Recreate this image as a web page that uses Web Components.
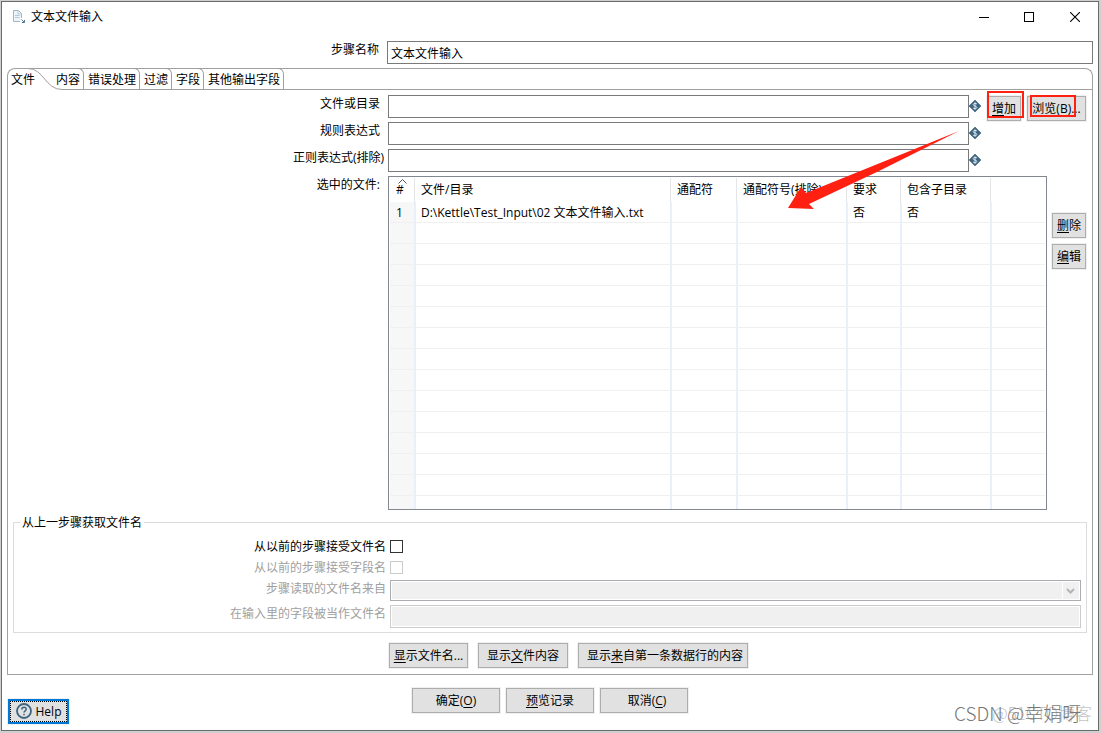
<!DOCTYPE html>
<html lang="zh-CN">
<head>
<meta charset="utf-8">
<title>文本文件输入</title>
<style>
  html { height: 100%; }
  body {
    box-sizing: border-box; min-height: 100%; margin: 0; padding: 1px 2px 2px 1px;
    display: flex; background: #cfcfcf;
    font: 12px/16px "Open Sans", "Noto Sans CJK SC", sans-serif; color: #000;
  }
</style>
</head>
<body>
<text-input-dialog></text-input-dialog>

<script>
const BASE = `
  *, *::before, *::after { box-sizing: border-box; }
  input, button, select { font: inherit; color: inherit; margin: 0; border-radius: 0; }
  u { text-underline-offset: 2px; }
`;

function define(name, html, setup) {
  const template = document.createElement('template');
  template.innerHTML = html;
  customElements.define(name, class extends HTMLElement {
    constructor() {
      super();
      this.attachShadow({ mode: 'open' }).append(template.content.cloneNode(true));
    }
    connectedCallback() {
      if (setup && !this.ready) { this.ready = true; setup(this, this.shadowRoot); }
    }
  });
}

/* Push button; its caption is slotted. */
define('push-button', `
  <style>${BASE}
    :host { display: block; }
    button {
      display: flex; align-items: center; justify-content: center; width: 100%; height: 25px;
      padding: 0 0 0 var(--caption-indent, 0); background: #e1e1e1; border: 1px solid #adadad; box-shadow: 0 0 0 1px #f0f0f0;
      white-space: nowrap;
    }
    :host([focused]) button { border: 2px solid #0078d7; outline: 1px dotted #000; outline-offset: -3px; }
  </style>
  <button type="button"><span><slot></slot></span></button>`);

/* Caption bar with the window controls. */
define('title-bar', `
  <style>${BASE}
    :host { display: flex; align-items: center; height: 29px; padding-left: 10px; }
    .icon { margin-right: 5px; }
    h1 { flex: 1; margin: 0; font: inherit; }
    button { display: grid; place-items: center; width: 46px; height: 29px; padding: 0; border: 0; background: none; }
  </style>
  <svg class="icon" width="14" height="14" viewBox="0 0 14 14" fill="none" stroke="#9db8c9">
    <path d="M8 11.500H1.500V.5H6.500L9.500 3.500V8" fill="#eef4f8"/><path d="M6 .5V4H9.500M3 5.500H7.500M3 7.500H7.500" stroke="#b4cad8"/>
    <path d="M9.500 9.500L12 12M12.500 10V12.500H10" stroke="#4d7896"/>
  </svg>
  <h1><slot></slot></h1>
  <button type="button" aria-label="最小化"><svg width="12" height="10"><path d="M2 5.500H12" stroke="#000"/></svg></button>
  <button type="button" aria-label="最大化"><svg width="10" height="10"><rect x=".5" y=".5" width="9" height="9" fill="none" stroke="#000"/></svg></button>
  <button type="button" aria-label="关闭"><svg width="10" height="10"><path d="M0 0L10 10M10 0L0 10" stroke="#000" stroke-width="1.100"/></svg></button>`);

/* Label and text box in one row, with an optional variable marker. */
define('text-row', `
  <style>${BASE}
    :host { display: flex; height: 23px; }
    label { flex: none; width: var(--label-width, 380px); padding: 1px 8px 0 0; text-align: right; white-space: nowrap; }
    :host([wide-label]) label { padding-right: 4px; }
    input { flex: 1; min-width: 0; height: 23px; padding: 0 3px; background: #fff; border: 1px solid #7a7a7a; }
    svg { display: none; flex: none; margin-top: 5px; }
    :host([variable]) svg { display: block; }
    :host([dim]) label { color: #a0a0a0; }
    :host([dim]) input { border-color: #ccc; background: #f0f0f0; box-shadow: inset 0 0 0 1px #fff; }
  </style>
  <label for="box"></label><input id="box" type="text">
  <svg width="12" height="12" viewBox="0 0 12 12">
    <path d="M6 0L12 6L6 12L0 6Z" fill="#3d6480" stroke="#3d6480" stroke-width=".6"/>
    <path d="M8 4.200C7.500 3.100 4.200 3 4.200 4.700C4.200 6.300 7.900 5.700 7.900 7.400C7.900 9.100 4.600 9 4 7.800M6 2.300V9.800" fill="none" stroke="#dfe8ee"/>
  </svg>`, (host, root) => {
  root.querySelector('label').textContent = host.getAttribute('label');
  const box = root.querySelector('input');
  box.value = host.getAttribute('value') || '';
  box.disabled = host.hasAttribute('dim');
});

define('check-row', `
  <style>${BASE}
    :host { display: flex; align-items: center; height: 21px; }
    label { width: 376px; padding-right: 4px; text-align: right; }
    input { appearance: none; width: 13px; height: 13px; border: 1px solid #333; background: #fff; }
    :host([dim]) label { color: #a0a0a0; }
    :host([dim]) input { border-color: #ccc; }
  </style>
  <label for="box"></label><input id="box" type="checkbox">`, (host, root) => {
  root.querySelector('label').textContent = host.getAttribute('label');
  root.querySelector('input').disabled = host.hasAttribute('dim');
});

define('select-row', `
  <style>${BASE}
    :host { display: flex; height: 21px; }
    label { flex: none; width: 376px; padding: 1px 4px 0 0; text-align: right; color: #a0a0a0; }
    .box { flex: 1; display: grid; }
    .box > * { grid-area: 1 / 1; }
    select { appearance: none; width: 100%; height: 21px; border: 1px solid #abadb3; background: #f0f0f0; box-shadow: inset 0 0 0 1px #fff; opacity: 1; }
    svg { justify-self: end; margin: 2px 1px 0 0; pointer-events: none; }
  </style>
  <label for="box"></label>
  <div class="box"><select id="box" disabled></select>
    <svg width="18" height="17"><path d="M.5 0V17" stroke="#fff"/><path d="M5 7L8.500 10.500L12 7" fill="none" stroke="#b4b4b4" stroke-width="2"/></svg>
  </div>`, (host, root) => {
  root.querySelector('label').textContent = host.getAttribute('label');
});

/* Tab strip: the selected tab runs into its neighbour with a sloping curve. */
define('tab-strip', `
  <style>${BASE}
    :host { position: relative; display: flex; height: 22px; margin-top: 4px; border: 1px solid #a0a0a0; border-bottom: 0; border-radius: 8px 8px 0 0; }
    button {
      height: 22px; margin-top: -1px; padding: 1px 3px 0 4px; white-space: nowrap; background: none;
      border: 1px solid #a0a0a0; border-left: 0; border-top-right-radius: 6px;
    }
    .first { width: 44px; padding-left: 3px; border: 0; text-align: left; }
    .second { border-bottom: 0; }
    .rest { flex: 1; border-bottom: 1px solid #a0a0a0; }
    svg { position: absolute; left: 0; top: -1px; pointer-events: none; }
  </style>
  <button type="button" class="first">文件</button>
  <button type="button" class="second">内容</button>
  <button type="button">错误处理</button>
  <button type="button">过滤</button>
  <button type="button">字段</button>
  <button type="button">其他输出字段</button>
  <span class="rest"></span>
  <svg width="76" height="22"><path d="M20 .5C36 .5 37 21.500 54 21.500H76" fill="none" stroke="#a0a0a0"/></svg>`);

define('file-table', `
  <style>${BASE}
    :host { display: block; height: 334px; overflow: hidden; padding: 1px; background: #fff; border: 1px solid #828790; }
    table { width: 100%; table-layout: fixed; border-collapse: separate; border-spacing: 0; }
    th, td { padding: 0 0 0 5px; font-weight: normal; text-align: left; white-space: nowrap; }
    th { height: 24px; background: linear-gradient(#e5e5e5, #e5e5e5) right 1px top / 1px 100% no-repeat; }
    td { height: 21px; padding-top: 2px; border-bottom: 1px solid #f0f0f0; border-right: 2px solid #e9f0fb; }
    th:last-child { background: none; } td:last-child { border-right: 0; }
    td:first-child { background: #f7f7f7; }
    th:first-child, td:first-child { padding-left: 6px; }
    th:first-child { position: relative; }
    svg { position: absolute; left: 8px; top: 1px; }
  </style>
  <table>
    <colgroup><col style="width:26px"><col style="width:256px"><col style="width:66px"><col style="width:110px"><col style="width:54px"><col style="width:90px"><col></colgroup>
    <thead><tr><th>#<svg width="9" height="5"><path d="M.5 4.500L4.500 .5L8.500 4.500" fill="none" stroke="#555"/></svg></th><th>文件/目录</th><th>通配符</th><th>通配符号(排除)</th><th>要求</th><th>包含子目录</th><th></th></tr></thead>
    <tbody><tr><td>1</td><td>D:\\Kettle\\Test_Input\\02 文本文件输入.txt</td><td></td><td></td><td>否</td><td>否</td><td></td></tr></tbody>
  </table>`, (host, root) => {
  const body = root.querySelector('tbody');
  for (let i = 0; i < 14; i++) {
    const row = body.insertRow();
    for (let c = 0; c < 7; c++) row.insertCell();
  }
});

define('group-box', `
  <style>${BASE}
    :host { display: block; }
    fieldset { min-width: 0; margin: 0; padding: 7px 5px 4px 0; border: 1px solid #dcdcdc; }
    legend { margin-left: 6px; padding: 0 2px; height: 14px; }
  </style>
  <fieldset><legend></legend><slot></slot></fieldset>`, (host, root) => {
  root.querySelector('legend').textContent = host.getAttribute('caption');
});

/* Red marks drawn over the form: two frames and a pointer. */
define('mark-up', `
  <style>
    :host { position: absolute; right: 8px; top: 88px; pointer-events: none; }
    svg { display: block; }
  </style>
  <svg width="310" height="130" viewBox="780 90 310 130">
    <g fill="none" stroke="#ff2012" stroke-width="2"><rect x="988" y="92" width="35" height="25"/><rect x="1031" y="96" width="44" height="20"/></g>
    <path d="M788 208L801 187L806 193L927 144L959 131L879 171L809 204L814 209Z" fill="#ff2012"/>
  </svg>`);

define('water-mark', `
  <style>
    :host { position: absolute; right: 6px; bottom: 5px; display: grid; width: 138px; align-items: center; line-height: 24px; white-space: nowrap; pointer-events: none; }
    span { grid-area: 1 / 1; font-family: "Noto Sans CJK SC", sans-serif; font-weight: 300; }
    .back { justify-self: end; font-size: 17px; color: #c4c4c4; }
    .front { font-size: 19px; color: #777; }
  </style>
  <span class="back">@51CTO博客</span><span class="front">CSDN @幸娟呀</span>`);

define('text-input-dialog', `
  <style>${BASE}
    :host { position: relative; flex: 1; display: flex; flex-direction: column; background: #fff; border: 1px solid #6b6b6b; }
    main { padding: 10px 5px 0; }
    .page { border: 1px solid #a0a0a0; border-top: 0; padding: 5px 5px 6px; }
    .files { display: grid; grid-template-columns: 1fr 34px; column-gap: 5px; padding-right: 1px; }
    .top { display: flex; align-items: flex-start; gap: 6px; margin-bottom: 4px; padding-right: 1px; }
    .rows { flex: 1; display: grid; gap: 4px; --label-width: 375px; }
    .pair { display: flex; gap: 6px; padding-top: 1px; }
    .add { width: 34px; } .browse { width: 59px; }
    .list { display: flex; }
    .list > span { flex: none; width: 375px; padding: 1px 8px 0 0; text-align: right; }
    .list file-table { flex: 1; }
    .side { display: grid; gap: 6px; align-content: start; padding-top: 37px; }
    group-box { margin-top: 5px; }
    .group { display: grid; }
    .group select-row { margin-top: 2px; }
    .group text-row { margin-top: 4px; --label-width: 376px; }
    .show { display: flex; gap: 10px; margin: 10px 0 0 376px; }
    .show-names { width: 79px; } .show-content { width: 90px; }
    .show-first { width: 170px; --caption-indent: 4px; }
    .bottom { position: relative; display: flex; justify-content: center; gap: 6px; padding: 13px 0 17px; }
    .bottom push-button { width: 88px; }
    .bottom .cancel { --caption-indent: 6px; }
    .bottom .help { position: absolute; left: 1px; top: 24px; width: 61px; }
    .help svg { vertical-align: -3px; margin-right: 4px; }
  </style>
  <title-bar>文本文件输入</title-bar>
  <main>
    <text-row label="步骤名称" value="文本文件输入"></text-row>
    <tab-strip></tab-strip>
    <div class="page">
      <div class="top">
        <div class="rows">
          <text-row variable label="文件或目录"></text-row>
          <text-row variable label="规则表达式"></text-row>
          <text-row variable wide-label label="正则表达式(排除)"></text-row>
        </div>
        <div class="pair">
          <push-button class="add"><u>增</u>加</push-button>
          <push-button class="browse">浏览(<u>B</u>)...</push-button>
        </div>
      </div>
      <div class="files">
        <div class="list"><span>选中的文件:</span><file-table></file-table></div>
        <div class="side">
          <push-button><u>删</u>除</push-button>
          <push-button><u>编</u>辑</push-button>
        </div>
      </div>
      <group-box caption="从上一步骤获取文件名">
        <div class="group">
          <check-row label="从以前的步骤接受文件名"></check-row>
          <check-row dim label="从以前的步骤接受字段名"></check-row>
          <select-row label="步骤读取的文件名来自"></select-row>
          <text-row dim wide-label label="在输入里的字段被当作文件名"></text-row>
        </div>
      </group-box>
      <div class="show">
        <push-button class="show-names"><u>显</u>示文件名...</push-button>
        <push-button class="show-content">显示<u>文</u>件内容</push-button>
        <push-button class="show-first">显示<u>来</u>自第一条数据行的内容</push-button>
      </div>
    </div>
    <div class="bottom">
      <push-button class="help" focused><svg width="16" height="16" viewBox="0 0 16 16" fill="none" stroke="#3d6480"><circle cx="8" cy="8" r="7" stroke-width="1.800"/><path d="M5.800 6.400C5.800 3.500 10.200 3.500 10.200 6.200C10.200 7.800 8 7.800 8 9.600M8 10.800V12.300" stroke-width="1.500"/></svg>Help</push-button>
      <push-button>确定(<u>O</u>)</push-button>
      <push-button><u>预</u>览记录</push-button>
      <push-button class="cancel">取消(<u>C</u>)</push-button>
    </div>
  </main>
  <mark-up></mark-up>
  <water-mark></water-mark>`);
</script>
</body>
</html>
